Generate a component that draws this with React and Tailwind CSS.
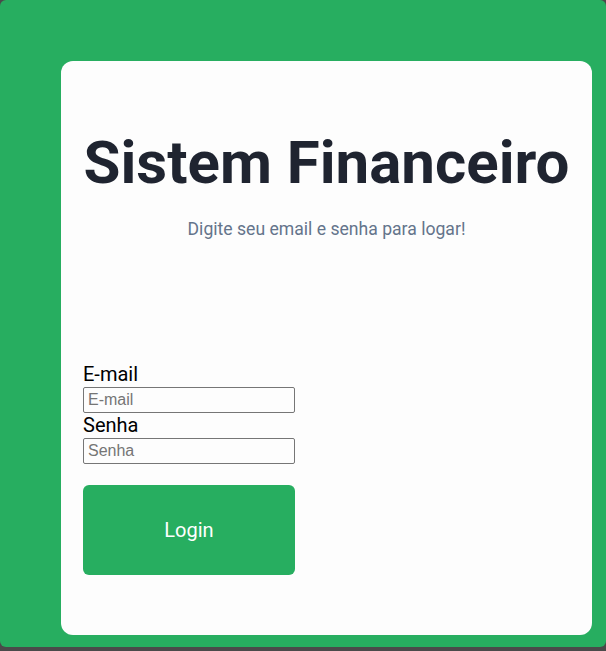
export default function App() {
  return (
    <div className="h-[651px] bg-[#4a4a4a] font-['Roboto',sans-serif]">
      <div className="h-[647px] rounded-md bg-[#27ae60] pl-[61px] pr-[14px] pt-[61px]">
        <div className="flex h-[574px] flex-col rounded-xl bg-[#fdfdfd] px-[22px]">
          <h1 className="mt-[72px] text-center text-[60px] font-bold leading-none text-[#1f2430]">
            Sistem Financeiro
          </h1>
          <p className="mt-[23px] text-center text-[17.6px] leading-[26px] text-[#64748b]">
            Digite seu email e senha para logar!
          </p>

          <form className="mt-[120px] flex w-[212px] flex-col">
            <label className="text-xl leading-[25px] text-black">E-mail</label>
            <input
              type="email"
              placeholder="E-mail"
              className="h-[26px] rounded-[2px] border border-[#767676] px-1 font-['Liberation_Sans',sans-serif] text-base placeholder:text-[#757575]"
            />
            <label className="text-xl leading-[25px] text-black">Senha</label>
            <input
              type="password"
              placeholder="Senha"
              className="h-[26px] rounded-[2px] border border-[#767676] px-1 font-['Liberation_Sans',sans-serif] text-base placeholder:text-[#757575]"
            />
            <button
              type="button"
              className="mt-[21px] h-[90px] rounded-md bg-[#27ae60] text-xl text-white"
            >
              Login
            </button>
          </form>
        </div>
      </div>
    </div>
  )
}
